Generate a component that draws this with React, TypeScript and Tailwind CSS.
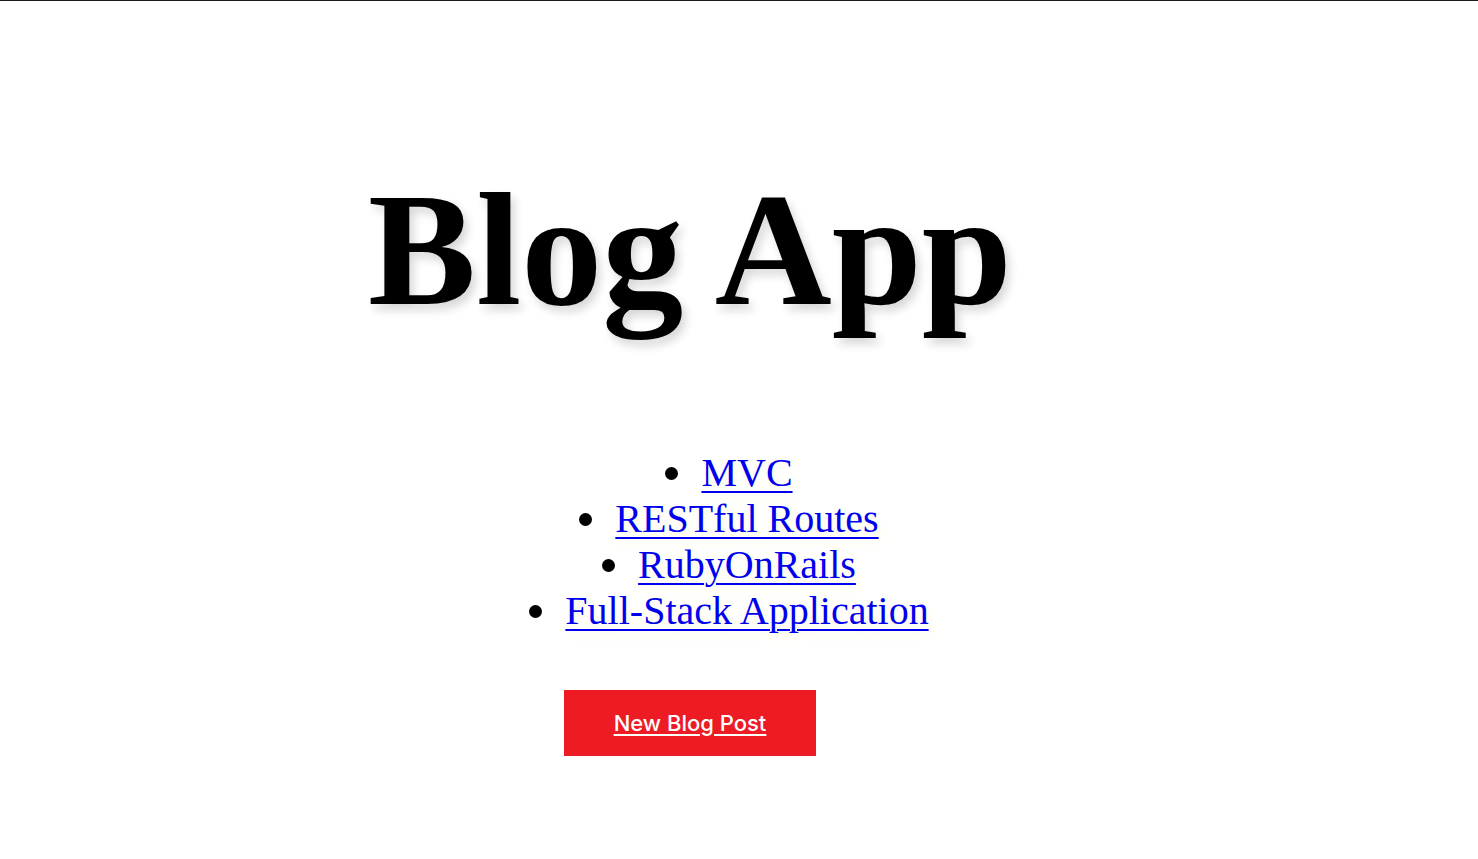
const topics = ["MVC", "RESTful Routes", "RubyOnRails", "Full-Stack Application"];

export default function App() {
  return (
    <div className="min-h-[859px] border-t border-[#1a1a1a] bg-white">
      <div className="w-[1380px] text-center">
        <h1 className="pt-[156px] font-['Liberation_Serif',serif] text-[162px] font-bold leading-[186px] text-black [text-shadow:4px_6px_10px_rgba(0,0,0,0.16)]">
          Blog App
        </h1>

        <ul className="mt-[107px] pl-[78px] font-['Liberation_Serif',serif] text-[40px] leading-[46px] [text-shadow:2px_4px_8px_rgba(250,245,200,0.6)]">
          {topics.map((topic) => (
            <li key={topic}>
              <span className="mr-[23px] inline-block h-[13px] w-[13px] rounded-full bg-black align-[6px]" />
              <a href="#" className="text-[#0000ee] underline decoration-2 underline-offset-[5px]">
                {topic}
              </a>
            </li>
          ))}
        </ul>

        <a
          href="#"
          className="mx-auto mt-[56px] flex h-[66px] w-[252px] items-center justify-center bg-[#ed1b24] font-['Inter',sans-serif] text-[22px] font-medium text-white underline underline-offset-[3px]"
        >
          New Blog Post
        </a>
      </div>
    </div>
  );
}
